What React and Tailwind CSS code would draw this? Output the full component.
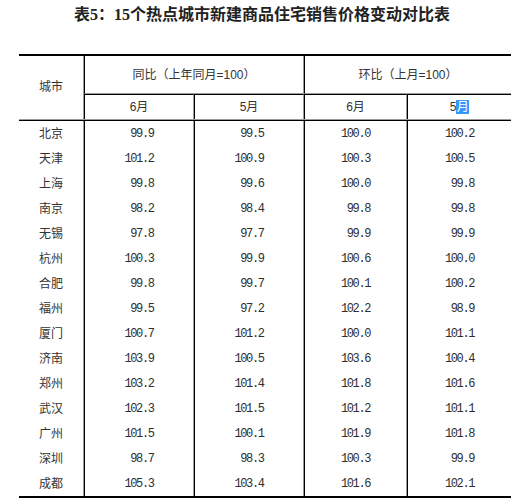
import React from "react";

const rows = [
  ["北京", "99.9", "99.5", "100.0", "100.2"],
  ["天津", "101.2", "100.9", "100.3", "100.5"],
  ["上海", "99.8", "99.6", "100.0", "99.8"],
  ["南京", "98.2", "98.4", "99.8", "99.8"],
  ["无锡", "97.8", "97.7", "99.9", "99.9"],
  ["杭州", "100.3", "99.9", "100.6", "100.0"],
  ["合肥", "99.8", "99.7", "100.1", "100.2"],
  ["福州", "99.5", "97.2", "102.2", "98.9"],
  ["厦门", "100.7", "101.2", "100.0", "101.1"],
  ["济南", "103.9", "100.5", "103.6", "100.4"],
  ["郑州", "103.2", "101.4", "101.8", "101.6"],
  ["武汉", "102.3", "101.5", "101.2", "101.1"],
  ["广州", "101.5", "100.1", "101.9", "101.8"],
  ["深圳", "98.7", "98.3", "100.3", "99.9"],
  ["成都", "105.3", "103.4", "101.6", "102.1"],
];

const cjk = { fontFamily: '"Liberation Sans", "Noto Sans CJK SC", sans-serif' };
const mono = { fontFamily: '"Liberation Mono", monospace' };

export default function App() {
  return (
    <div className="w-[529px] h-[504px] bg-white text-[#333]">
      <div
        className="h-[54px] pt-[5px] pr-[5px] text-center text-[16px] leading-[20px] font-bold text-[#222]"
        style={{ fontFamily: '"Liberation Serif", "Noto Sans CJK SC", serif' }}
      >
        表5：15个热点城市新建商品住宅销售价格变动对比表
      </div>
      <div
        className="ml-[19px] w-[492px] grid grid-cols-[65px_110px_110px_103px_104px] grid-rows-[38px_25px] border-t-2 border-b-2 border-black text-[12px]"
        style={cjk}
      >
        <div className="row-span-2 flex items-center justify-center border-r border-[#9a9a9a] pb-[1px]">城市</div>
        <div className="col-span-2 flex items-center justify-center border-l border-black border-r border-r-[#9a9a9a] border-b border-b-[#9a9a9a]">
          同比（上年同月=100）
        </div>
        <div className="col-span-2 flex items-center justify-center border-l border-black border-b border-b-[#9a9a9a]">
          环比（上月=100）
        </div>
        <div className="flex items-center justify-center border-t border-black border-l border-r border-r-[#9a9a9a]">6月</div>
        <div className="flex items-center justify-center border-t border-black border-l border-r border-r-[#9a9a9a]">5月</div>
        <div className="flex items-center justify-center border-t border-black border-l border-r border-r-[#9a9a9a]">6月</div>
        <div className="flex items-center justify-center border-t border-black border-l">
          5<span className="inline-block w-[13px] h-[14px] leading-[14px] bg-[#3399ff] text-white text-center">月</span>
        </div>
        <div className="col-span-5 h-[2px] border-t border-[#9a9a9a] border-b border-b-black"></div>
        {rows.map((r) => (
          <React.Fragment key={r[0]}>
            <div className="h-[25px] flex items-center justify-center border-r border-[#9a9a9a]">{r[0]}</div>
            {r.slice(1).map((v, i) => (
              <div
                key={i}
                className={
                  i < 3
                    ? "h-[25px] flex items-center justify-center border-l border-black border-r border-r-[#9a9a9a] text-[12px] tracking-[-1.4px] whitespace-pre text-[#2e2e2e]"
                    : "h-[25px] flex items-center justify-center border-l border-black text-[12px] tracking-[-1.4px] whitespace-pre text-[#2e2e2e]"
                }
                style={mono}
              >
                {v.padStart(5, " ")}
              </div>
            ))}
          </React.Fragment>
        ))}
      </div>
    </div>
  );
}
